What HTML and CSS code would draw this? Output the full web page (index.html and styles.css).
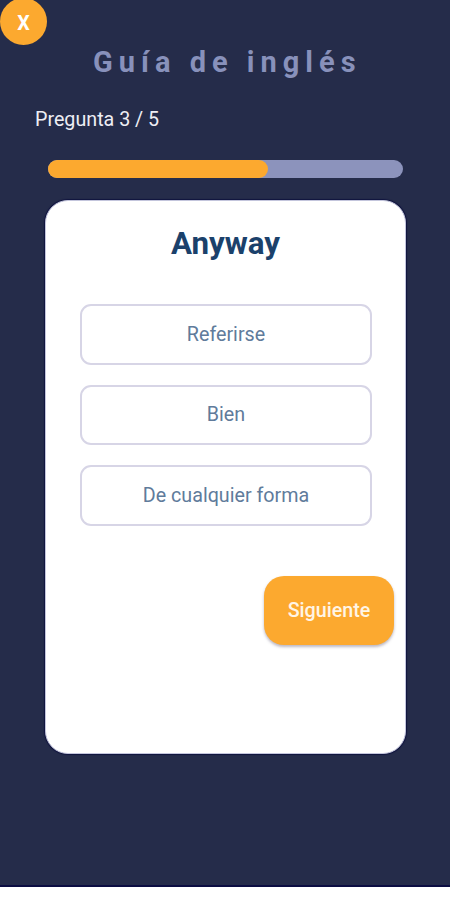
FILE: index.html
```html
<!DOCTYPE html>
<html lang="es">
<head>
    <meta charset="UTF-8">
    <meta name="viewport" content="width=device-width, initial-scale=1.0">
    <title>Guía de inglés</title>
    <link rel="stylesheet" href="styles.css">
</head>
<body>
    <div class="screen">
        <button type="button" class="close">X</button>
        <h1>Guía de inglés</h1>
        <p class="counter">Pregunta 3 / 5</p>
        <div class="progress">
            <div class="progress-bar" style="width: 62%"></div>
        </div>

        <div class="card">
            <h2>Anyway</h2>
            <div class="options">
                <button type="button" class="option">Referirse</button>
                <button type="button" class="option">Bien</button>
                <button type="button" class="option">De cualquier forma</button>
            </div>
            <button type="button" class="next">Siguiente</button>
        </div>
    </div>
</body>
</html>
```

FILE: styles.css
```css
* {
    box-sizing: border-box;
}
body {
    margin: 0;
    background-color: #fff;
    font-family: Roboto, sans-serif;
}
button {
    font-family: inherit;
    padding: 0;
    border: none;
    cursor: pointer;
}
.screen {
    display: flex;
    flex-direction: column;
    height: 887px;
    overflow: hidden;
    background-color: #252c4a;
    border-bottom: 2px solid #0b0d42;
}
.close {
    flex-shrink: 0;
    width: 47px;
    height: 47px;
    margin-top: -2px;
    padding-top: 3px;
    border-radius: 50%;
    background-color: #fca92f;
    color: #fff;
    font-size: 19.7px;
    font-weight: 700;
}
h1 {
    margin: 0 0 0 93px;
    color: #8891bb;
    font-size: 29px;
    line-height: 35px;
    letter-spacing: 6px;
    white-space: nowrap;
}
.counter {
    margin: 28px 0 0 35px;
    color: #eeeef4;
    font-size: 19.7px;
    line-height: 24px;
}
.progress {
    width: 355px;
    height: 18px;
    margin: 28px 0 0 48px;
    border-radius: 9px;
    background-color: #8c93bc;
}
.progress-bar {
    height: 100%;
    border-radius: 9px;
    background-color: #fca92f;
}
.card {
    display: flex;
    flex-direction: column;
    width: 361px;
    height: 554px;
    margin: 22px 0 0 45px;
    padding: 24px 11px 0 34px;
    border: 1px solid #c3c5dc;
    border-radius: 23px;
    background-color: #fff;
    box-shadow: 0 0 1px 1px #10143f;
}
h2 {
    margin: 0 23px 0 0;
    color: #1b416b;
    font-size: 31.3px;
    line-height: 37px;
    text-align: center;
}
.options {
    display: flex;
    flex-direction: column;
    gap: 20px;
    margin: 42px 22px 0 0;
}
.option {
    height: 60.5px;
    border: 2px solid #d7d5e6;
    border-radius: 11px;
    background-color: #fff;
    color: #607b9b;
    font-size: 19.7px;
}
.next {
    align-self: flex-end;
    width: 130px;
    height: 69px;
    margin-top: 50px;
    padding-top: 1px;
    border-radius: 20px;
    background-color: #fca92f;
    color: #fff5e6;
    font-size: 19.7px;
    font-weight: 500;
    box-shadow: 0 2px 3px rgba(60, 50, 80, 0.35);
}
```
